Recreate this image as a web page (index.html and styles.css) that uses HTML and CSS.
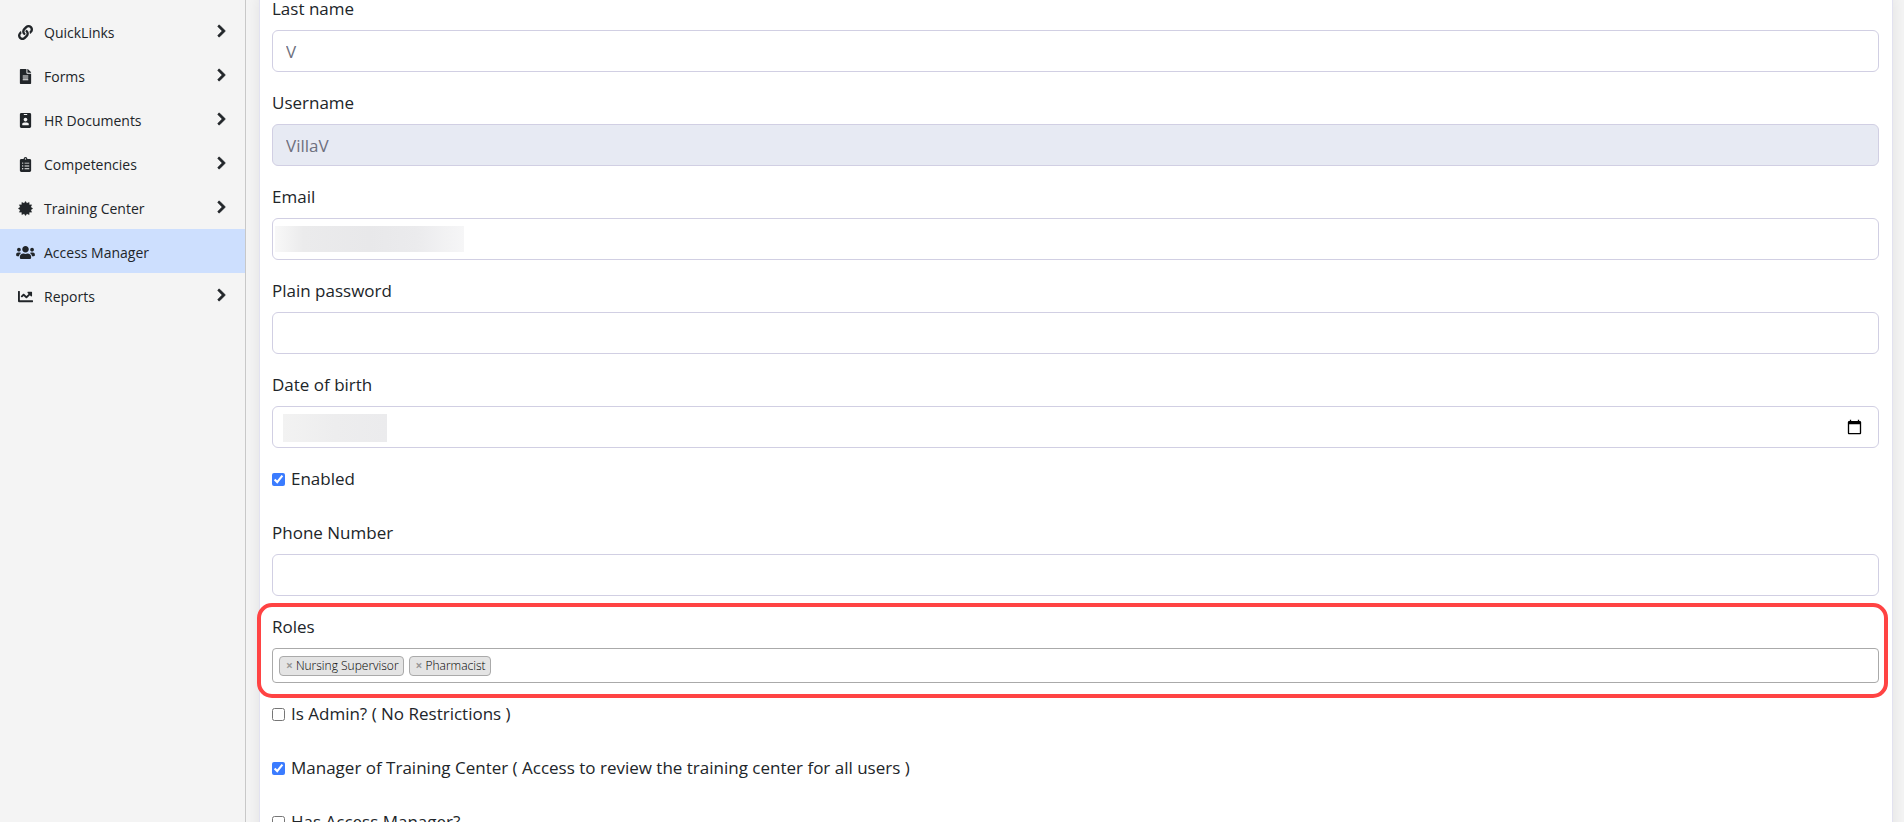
FILE: index.html
```html
<!DOCTYPE html>
<html lang="en">
<head>
    <meta charset="UTF-8">
    <meta name="viewport" content="width=device-width, initial-scale=1.0">
    <title>Access Manager</title>
    <link rel="stylesheet" href="styles.css">
</head>
<body>
    <svg class="sprite" aria-hidden="true">
        <symbol id="chevron" viewBox="0 0 320 512"><path d="M285.476 272.971L91.132 467.314c-9.373 9.373-24.569 9.373-33.941 0l-22.667-22.667c-9.357-9.357-9.375-24.522-.04-33.901L188.505 256 34.484 101.255c-9.335-9.379-9.317-24.544.04-33.901l22.667-22.667c9.373-9.373 24.569-9.373 33.941 0L285.475 239.03c9.373 9.372 9.373 24.568.001 33.941z"/></symbol>
    </svg>

    <div class="layout">
        <nav class="sidebar">
            <a class="nav-item" href="#">
                <svg class="nav-icon" viewBox="0 0 512 512"><path d="M326.612 185.391c59.747 59.809 58.927 155.698.36 214.59-.11.12-.24.25-.36.37l-67.2 67.2c-59.27 59.27-155.699 59.262-214.96 0-59.27-59.26-59.27-155.7 0-214.96l37.106-37.106c9.84-9.84 26.786-3.3 27.294 10.606.648 17.722 3.826 35.527 9.69 52.721 1.986 5.822.567 12.262-3.783 16.612l-13.087 13.087c-28.026 28.026-28.905 73.66-1.155 101.96 28.024 28.579 74.086 28.749 102.325.51l67.2-67.19c28.191-28.191 28.073-73.757 0-101.83-3.701-3.694-7.429-6.564-10.341-8.569a16.037 16.037 0 0 1-6.947-12.606c-.396-10.567 3.348-21.456 11.698-29.806l21.054-21.055c5.521-5.521 14.182-6.199 20.584-1.731a152.482 152.482 0 0 1 20.522 17.197zM467.547 44.449c-59.261-59.262-155.69-59.27-214.96 0l-67.2 67.2c-.12.12-.25.25-.36.37-58.566 58.892-59.387 154.781.36 214.59a152.454 152.454 0 0 0 20.521 17.196c6.402 4.468 15.064 3.789 20.584-1.731l21.054-21.055c8.35-8.35 12.094-19.239 11.698-29.806a16.037 16.037 0 0 0-6.947-12.606c-2.912-2.005-6.64-4.875-10.341-8.569-28.073-28.073-28.191-73.639 0-101.83l67.2-67.19c28.239-28.239 74.3-28.069 102.325.51 27.75 28.3 26.872 73.934-1.155 101.96l-13.087 13.087c-4.35 4.35-5.769 10.79-3.783 16.612 5.864 17.194 9.042 34.999 9.69 52.721.509 13.906 17.454 20.446 27.294 10.606l37.106-37.106c59.271-59.259 59.271-155.699.001-214.959z"/></svg>
                <span class="nav-text">QuickLinks</span>
                <svg class="nav-arrow"><use href="#chevron"/></svg>
            </a>
            <a class="nav-item" href="#">
                <svg class="nav-icon" viewBox="0 0 384 512"><path d="M224 136V0H24C10.7 0 0 10.7 0 24v464c0 13.3 10.7 24 24 24h336c13.3 0 24-10.7 24-24V160H248c-13.2 0-24-10.8-24-24zm64 236c0 6.6-5.4 12-12 12H108c-6.6 0-12-5.4-12-12v-8c0-6.6 5.4-12 12-12h168c6.6 0 12 5.4 12 12v8zm0-64c0 6.6-5.4 12-12 12H108c-6.6 0-12-5.4-12-12v-8c0-6.6 5.4-12 12-12h168c6.6 0 12 5.4 12 12v8zm0-72v8c0 6.6-5.4 12-12 12H108c-6.6 0-12-5.4-12-12v-8c0-6.6 5.4-12 12-12h168c6.6 0 12 5.4 12 12zm96-114.1v6.1H256V0h6.1c6.4 0 12.5 2.5 17 7l97.9 98c4.5 4.5 7 10.6 7 16.9z"/></svg>
                <span class="nav-text">Forms</span>
                <svg class="nav-arrow"><use href="#chevron"/></svg>
            </a>
            <a class="nav-item" href="#">
                <svg class="nav-icon" viewBox="0 0 384 512"><path d="M336 0H48C21.5 0 0 21.5 0 48v416c0 26.5 21.5 48 48 48h288c26.5 0 48-21.5 48-48V48c0-26.5-21.5-48-48-48zM144 32h96c8.8 0 16 7.2 16 16s-7.2 16-16 16h-96c-8.8 0-16-7.2-16-16s7.2-16 16-16zm48 128c35.3 0 64 28.7 64 64s-28.7 64-64 64-64-28.7-64-64 28.7-64 64-64zm112 236.8c0 10.6-10 19.2-22.4 19.2H102.4C90 416 80 407.4 80 396.8v-19.2c0-31.8 30.1-57.6 67.2-57.6h5c12.3 5.1 25.7 8 39.8 8s27.6-2.9 39.8-8h5c37.1 0 67.2 25.8 67.2 57.6v19.2z"/></svg>
                <span class="nav-text">HR Documents</span>
                <svg class="nav-arrow"><use href="#chevron"/></svg>
            </a>
            <a class="nav-item" href="#">
                <svg class="nav-icon" viewBox="0 0 384 512"><path d="M336 64h-80c0-35.3-28.7-64-64-64s-64 28.7-64 64H48C21.5 64 0 85.5 0 112v352c0 26.5 21.5 48 48 48h288c26.5 0 48-21.5 48-48V112c0-26.5-21.5-48-48-48zM96 424c-13.3 0-24-10.7-24-24s10.7-24 24-24 24 10.7 24 24-10.7 24-24 24zm0-96c-13.3 0-24-10.7-24-24s10.7-24 24-24 24 10.7 24 24-10.7 24-24 24zm0-96c-13.3 0-24-10.7-24-24s10.7-24 24-24 24 10.7 24 24-10.7 24-24 24zm96-192c13.3 0 24 10.7 24 24s-10.7 24-24 24-24-10.7-24-24 10.7-24 24-24zm128 368c0 4.4-3.6 8-8 8H168c-4.4 0-8-3.6-8-8v-16c0-4.4 3.6-8 8-8h144c4.4 0 8 3.6 8 8v16zm0-96c0 4.4-3.6 8-8 8H168c-4.4 0-8-3.6-8-8v-16c0-4.4 3.6-8 8-8h144c4.4 0 8 3.6 8 8v16zm0-96c0 4.4-3.6 8-8 8H168c-4.4 0-8-3.6-8-8v-16c0-4.4 3.6-8 8-8h144c4.4 0 8 3.6 8 8v16z"/></svg>
                <span class="nav-text">Competencies</span>
                <svg class="nav-arrow"><use href="#chevron"/></svg>
            </a>
            <a class="nav-item" href="#">
                <svg class="nav-icon" viewBox="0 0 512 512"><path stroke="currentColor" stroke-width="8" stroke-linejoin="round" d="M506 256L436 304 473 381 388 388 381 473 304 436 256 506 208 436 131 473 124 388 39 381 76 304 6 256 76 208 39 131 124 124 131 39 208 76 256 6 304 76 381 39 388 124 473 131 436 208z"/></svg>
                <span class="nav-text">Training Center</span>
                <svg class="nav-arrow"><use href="#chevron"/></svg>
            </a>
            <a class="nav-item active" href="#">
                <svg class="nav-icon" viewBox="0 0 640 512"><path d="M96 224c35.3 0 64-28.7 64-64s-28.7-64-64-64-64 28.7-64 64 28.7 64 64 64zm448 0c35.3 0 64-28.7 64-64s-28.7-64-64-64-64 28.7-64 64 28.7 64 64 64zm32 32h-64c-17.6 0-33.5 7.1-45.1 18.6 40.3 22.1 68.9 62 75.1 109.4h66c17.7 0 32-14.3 32-32v-32c0-35.3-28.7-64-64-64zm-256 0c61.9 0 112-50.1 112-112S381.9 32 320 32 208 82.1 208 144s50.1 112 112 112zm76.8 32h-8.3c-20.8 10-43.9 16-68.5 16s-47.6-6-68.5-16h-8.3C179.6 288 128 339.6 128 403.2V432c0 26.5 21.5 48 48 48h288c26.5 0 48-21.5 48-48v-28.8c0-63.6-51.6-115.2-115.2-115.2zm-223.7-13.4C161.5 263.1 145.6 256 128 256H64c-35.3 0-64 28.7-64 64v32c0 17.7 14.3 32 32 32h65.9c6.3-47.4 34.9-87.3 75.2-109.4z"/></svg>
                <span class="nav-text">Access Manager</span>
            </a>
            <a class="nav-item" href="#">
                <svg class="nav-icon" viewBox="0 0 512 512"><path d="M496 384H64V80c0-8.84-7.16-16-16-16H16C7.16 64 0 71.16 0 80v336c0 17.67 14.33 32 32 32h464c8.84 0 16-7.16 16-16v-32c0-8.84-7.16-16-16-16zM464 96H345.94c-21.38 0-32.09 25.85-16.97 40.97l32.4 32.4L288 242.75l-73.37-73.37c-12.5-12.5-32.76-12.5-45.25 0l-68.69 68.69c-6.25 6.25-6.25 16.38 0 22.63l22.62 22.62c6.25 6.25 16.38 6.25 22.63 0L192 237.25l73.37 73.37c12.5 12.5 32.76 12.5 45.25 0l96-96 32.4 32.4c15.12 15.12 40.97 4.41 40.97-16.97V112c.01-8.84-7.15-16-15.99-16z"/></svg>
                <span class="nav-text">Reports</span>
                <svg class="nav-arrow"><use href="#chevron"/></svg>
            </a>
        </nav>

        <main class="content">
            <form class="card">
                <div class="form-group">
                    <label for="last-name">Last name</label>
                    <input class="form-control" type="text" id="last-name" value="V">
                </div>
                <div class="form-group">
                    <label for="username">Username</label>
                    <input class="form-control" type="text" id="username" value="VillaV" disabled>
                </div>
                <div class="form-group">
                    <label for="email">Email</label>
                    <div class="masked">
                        <input class="form-control" type="email" id="email">
                        <span class="mask mask-email"></span>
                    </div>
                </div>
                <div class="form-group">
                    <label for="password">Plain password</label>
                    <input class="form-control" type="password" id="password">
                </div>
                <div class="form-group">
                    <label for="dob">Date of birth</label>
                    <div class="masked">
                        <input class="form-control" type="date" id="dob">
                        <span class="mask mask-date"></span>
                    </div>
                </div>
                <div class="form-check">
                    <input type="checkbox" id="enabled" checked>
                    <label for="enabled">Enabled</label>
                </div>
                <div class="form-group">
                    <label for="phone">Phone Number</label>
                    <input class="form-control" type="tel" id="phone">
                </div>
                <div class="form-group highlight">
                    <label for="roles">Roles</label>
                    <div class="tag-select">
                        <span class="tag"><button type="button" class="tag-remove">×</button>Nursing Supervisor</span>
                        <span class="tag"><button type="button" class="tag-remove">×</button>Pharmacist</span>
                        <input class="tag-search" type="text" id="roles">
                    </div>
                </div>
                <div class="form-check">
                    <input type="checkbox" id="is-admin">
                    <label for="is-admin">Is Admin? ( No Restrictions )</label>
                </div>
                <div class="form-check">
                    <input type="checkbox" id="training-manager" checked>
                    <label for="training-manager">Manager of Training Center ( Access to review the training center for all users )</label>
                </div>
                <div class="form-check">
                    <input type="checkbox" id="access-manager">
                    <label for="access-manager">Has Access Manager?</label>
                </div>
            </form>
        </main>
    </div>
</body>
</html>
```
FILE: styles.css
```css
* {
    box-sizing: border-box;
}

body {
    margin: 0;
    background: #f4f4f4;
    color: #212529;
    font-family: "Segoe UI", "Open Sans", "Noto Sans", sans-serif;
    font-size: 17px;
    line-height: 26px;
}

.sprite {
    display: none;
}

.layout {
    display: flex;
    height: 100vh;
    overflow: hidden;
}

/* sidebar */
.sidebar {
    flex: 0 0 246px;
    padding-top: 9px;
    border-right: 1px solid #c8c8c8;
    background: #f4f4f4;
}

.nav-item {
    display: flex;
    align-items: center;
    height: 44px;
    padding: 0 19px 0 16px;
    color: #212529;
    font-size: 14px;
    text-decoration: none;
}

.nav-item.active {
    background: #cddffe;
}

.nav-icon {
    width: 19px;
    height: 15px;
    margin: 2px 9px 0 0;
    fill: currentColor;
}

.nav-text {
    flex: 1;
    padding-top: 3px;
}

.nav-arrow {
    width: 9px;
    height: 14px;
    margin-bottom: 1px;
    fill: currentColor;
    stroke: currentColor;
    stroke-width: 28px;
}

/* user form */
.content {
    flex: 1;
    min-width: 0;
    padding: 0 11px 0 13px;
}

.card {
    min-height: 100%;
    margin-top: -4px;
    padding: 0 13px 0 12px;
    border: 1px solid #e2e2f0;
    border-width: 0 1px;
    background: #fff;
    box-shadow: 0 0 14px rgba(0, 0, 0, 0.08);
}

.form-group {
    margin-bottom: 18px;
}

.form-group label {
    display: block;
    margin-bottom: 8px;
}

.form-control {
    display: block;
    width: 100%;
    height: 42px;
    padding: 6px 13px;
    border: 1px solid #d1cfe3;
    border-radius: 6px;
    background: #fff;
    color: #6e707e;
    font-family: inherit;
    font-size: 17px;
}

.form-control:disabled {
    background: #e7eaf3;
}

.form-control::-webkit-datetime-edit {
    opacity: 0;
}

.masked {
    position: relative;
}

.mask {
    position: absolute;
    top: 8px;
}

.mask-email {
    left: 3px;
    width: 189px;
    height: 26px;
    background: linear-gradient(90deg, #f8f8f8, #ebebec 15%, #e8e8ea 50%, #ebebed 75%, #f6f6f7);
}

.mask-date {
    left: 11px;
    width: 104px;
    height: 28px;
    background: linear-gradient(90deg, #f2f2f2, #ededee 50%, #ebebed);
}

.form-check {
    display: flex;
    align-items: center;
    margin-bottom: 28px;
}

.form-check input {
    width: 13px;
    height: 13px;
    margin: 0 6px 0 0;
    accent-color: #3b7cff;
}

/* roles */
.highlight {
    position: relative;
}

.highlight::after {
    content: "";
    position: absolute;
    inset: -11px -9px -15px -15px;
    border: 4px solid #ff4343;
    border-radius: 15px;
    pointer-events: none;
}

.tag-select {
    display: flex;
    align-items: center;
    gap: 5px;
    height: 35px;
    padding: 0 6px;
    border: 1px solid #aaa;
    border-radius: 4px;
}

.tag {
    display: flex;
    align-items: center;
    height: 20px;
    padding: 0 4px 0 6px;
    border: 1px solid #aaa;
    border-radius: 4px;
    background: #e4e4e4;
    color: #000;
    font-size: 12px;
    font-weight: 300;
}

.tag-remove {
    margin: 0;
    padding: 0 3px 0 0;
    border: 0;
    background: none;
    color: #999;
    font: bold 12px "Open Sans", sans-serif;
}

.tag-search {
    flex: 1;
    min-width: 0;
    border: 0;
    outline: 0;
    background: none;
}
```
